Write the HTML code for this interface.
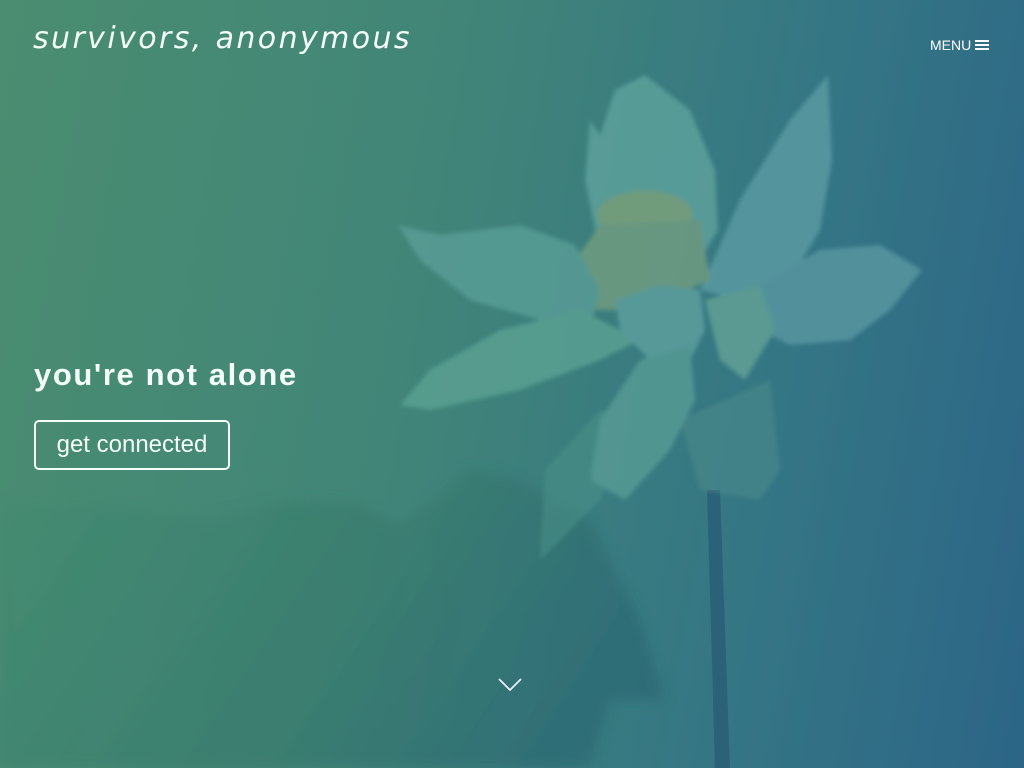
<!DOCTYPE html>
<html><head><meta charset="utf-8"><style>
html,body{margin:0;padding:0;width:1024px;height:768px;overflow:hidden}
body{position:relative;background:linear-gradient(100deg,#4a8d70 0%,#418578 40%,#347585 75%,#2c6586 100%);font-family:"Liberation Sans",sans-serif;color:#f3fff8}
svg{position:absolute;left:0;top:0}
.logo{position:absolute;left:33px;top:21px;font-family:"DejaVu Sans",cursive;font-style:italic;font-size:30px;letter-spacing:2.4px;color:#f3fff6;font-weight:normal;white-space:nowrap}
.menu{position:absolute;left:930px;top:37px;font-size:14px;color:#fff}
.menu span{display:inline-block;vertical-align:middle;margin-left:4px;width:14px;height:10px;border-top:2px solid #fff;border-bottom:2px solid #fff;position:relative;box-sizing:border-box;top:-1px}
.menu span:after{content:"";position:absolute;left:0;right:0;top:2px;border-top:2px solid #fff}
h1{position:absolute;left:34px;top:357px;margin:0;font-size:31px;letter-spacing:1.6px;font-weight:bold}
.btn{position:absolute;left:34px;top:420px;width:192px;height:46px;border:2px solid #f3fff8;border-radius:5px;font-size:24px;text-align:center;line-height:46px}
</style></head><body>
<svg width="1024" height="768" viewBox="0 0 1024 768">
<defs>
<linearGradient id="leaf" x1="0" x2="1" y1="0" y2="0.3"><stop offset="0" stop-color="#428b70"/><stop offset="0.6" stop-color="#367a6c"/><stop offset="1" stop-color="#2a6670"/></linearGradient>
<filter id="b"><feGaussianBlur stdDeviation="2"/></filter>
<filter id="b2"><feGaussianBlur stdDeviation="6"/></filter>
</defs>
<g filter="url(#b2)">
<path d="M0,508 L100,505 L150,515 L210,520 L290,500 L360,505 L400,525 L440,495 L470,470 L520,480 L560,505 L590,520 L610,560 L640,620 L665,700 L610,700 L590,768 L0,768Z" fill="url(#leaf)" opacity="0.6"/>
</g>
<path d="M707,490 L720,490 L730,768 L715,768Z" fill="#2b6278"/>
<g filter="url(#b)" opacity="0.8">
<path d="M540,560 L545,470 L600,410 L640,420 L600,500Z" fill="#4e958a" opacity="0.6"/>
<path d="M680,420 L770,380 L780,470 L760,500 L700,490Z" fill="#4f8f8e" opacity="0.6"/>
<path d="M700,290 L740,200 L790,120 L828,75 L832,160 L820,230 L790,280 L740,300Z" fill="#5b9ca4"/>
<path d="M760,285 L820,250 L880,245 L922,270 L890,310 L850,340 L790,345 L760,330Z" fill="#5a98a2"/>
<path d="M590,120 L600,135 L615,90 L645,75 L690,110 L715,170 L718,230 L700,260 L630,250 L595,230 L585,180Z" fill="#5fa39e"/>
<ellipse cx="645" cy="215" rx="48" ry="24" fill="#7fa47c"/>
<path d="M575,260 L600,225 L700,220 L710,280 L640,310 L580,310Z" fill="#739e80"/>
<path d="M398,225 L440,235 L520,225 L575,245 L600,290 L590,330 L540,320 L470,300 L420,260Z" fill="#5a9e98"/>
<path d="M400,405 L430,370 L500,330 L580,310 L640,340 L600,360 L520,390 L430,410Z" fill="#5ba293"/>
<path d="M615,300 L660,285 L700,290 L705,330 L690,360 L650,360 L620,330Z" fill="#5ea1a0"/>
<path d="M705,300 L760,285 L775,330 L745,380 L720,360Z" fill="#64a396"/>
<path d="M590,480 L600,420 L640,360 L690,345 L695,400 L670,450 L625,500Z" fill="#589c96"/>
</g>
<path d="M499,679 L510,690 L521,679" fill="none" stroke="#eef" stroke-width="1.8"/>
</svg>
<div class="logo">survivors, anonymous</div>
<div class="menu">MENU<span></span></div>
<h1>you're not alone</h1>
<div class="btn">get connected</div>
</body></html>
